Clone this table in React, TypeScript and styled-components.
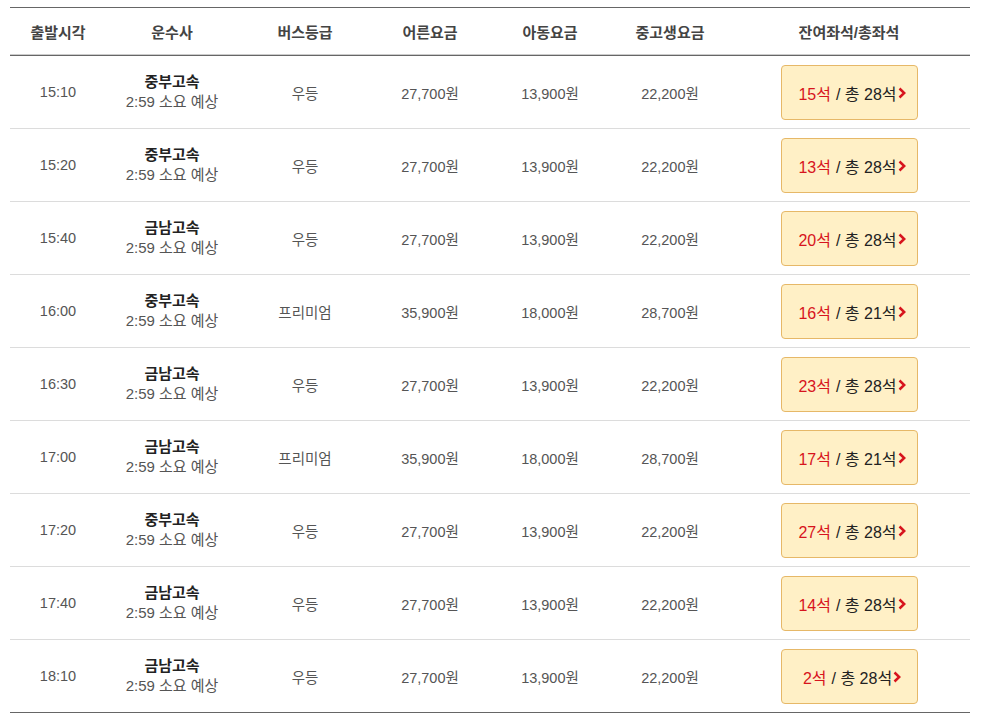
import React from "react";
import styled, { createGlobalStyle } from "styled-components";

const Global = createGlobalStyle`
  html, body { margin: 0; padding: 0; background: #fff; }
  body { font-family: "Liberation Sans", "Noto Sans CJK KR", sans-serif; }
`;

const Wrap = styled.div`
  padding: 7px 0 0 10px;
`;

const Table = styled.table`
  width: 960px;
  border-collapse: collapse;
  table-layout: fixed;
  border-top: 1px solid #666;
  border-bottom: 1px solid #666;
`;

const Th = styled.th<{ $w: number }>`
  width: ${(p) => p.$w}px;
  height: 47px;
  padding: 0;
  font-size: 15px;
  font-weight: bold;
  color: #444;
  text-align: center;
  vertical-align: middle;
  border-bottom: 1px solid #666;
  box-shadow: inset 0 -1px 0 #ccc;
`;

const Tr = styled.tr`
  & + & td { border-top: 1px solid #dcdcdc; }
`;

const Td = styled.td`
  height: 72px;
  padding: 0;
  font-size: 14.5px;
  color: #555;
  text-align: center;
  vertical-align: middle;
`;

const Company = styled.div`
  font-size: 15px;
  font-weight: bold;
  color: #222;
  line-height: 20px;
`;

const Duration = styled.div`
  font-size: 15px;
  color: #555;
  line-height: 20px;
`;

const SeatButton = styled.button`
  width: 137px;
  height: 55px;
  margin-top: 1px;
  background: #fff0c6;
  border: 1px solid #e6b868;
  border-radius: 4px;
  display: inline-flex;
  align-items: center;
  justify-content: center;
  font-family: "Liberation Sans", "Noto Sans CJK KR", sans-serif;
  font-size: 16px;
  color: #222;
  cursor: pointer;
  padding: 0 0 0 6px;
`;

const Remain = styled.span`
  color: #d7141d;
  margin-right: 5px;
`;

const Total = styled.span`
  color: #222;
`;

const Chevron = () => (
  <svg width="8" height="12" viewBox="0 0 8 12" style={{ marginLeft: 1 }}>
    <polyline points="1.5,1.5 6.2,6 1.5,10.5" fill="none" stroke="#d7141d" strokeWidth="2.5" />
  </svg>
);

const cols = [96, 132, 134, 116, 124, 116, 242];
const heads = ["출발시각", "운수사", "버스등급", "어른요금", "아동요금", "중고생요금", "잔여좌석/총좌석"];

type Row = [string, string, string, string, string, string, number, number];
const rows: Row[] = [
  ["15:10", "중부고속", "우등", "27,700원", "13,900원", "22,200원", 15, 28],
  ["15:20", "중부고속", "우등", "27,700원", "13,900원", "22,200원", 13, 28],
  ["15:40", "금남고속", "우등", "27,700원", "13,900원", "22,200원", 20, 28],
  ["16:00", "중부고속", "프리미엄", "35,900원", "18,000원", "28,700원", 16, 21],
  ["16:30", "금남고속", "우등", "27,700원", "13,900원", "22,200원", 23, 28],
  ["17:00", "금남고속", "프리미엄", "35,900원", "18,000원", "28,700원", 17, 21],
  ["17:20", "중부고속", "우등", "27,700원", "13,900원", "22,200원", 27, 28],
  ["17:40", "금남고속", "우등", "27,700원", "13,900원", "22,200원", 14, 28],
  ["18:10", "금남고속", "우등", "27,700원", "13,900원", "22,200원", 2, 28],
];

export default function App() {
  return (
    <>
      <Global />
      <Wrap>
        <Table>
          <thead>
            <tr>
              {heads.map((h, i) => (
                <Th key={h} $w={cols[i]}>{h}</Th>
              ))}
            </tr>
          </thead>
          <tbody>
            {rows.map((r, i) => (
              <Tr key={i}>
                <Td>{r[0]}</Td>
                <Td>
                  <Company>{r[1]}</Company>
                  <Duration>2:59 소요 예상</Duration>
                </Td>
                <Td>{r[2]}</Td>
                <Td>{r[3]}</Td>
                <Td>{r[4]}</Td>
                <Td>{r[5]}</Td>
                <Td>
                  <SeatButton>
                    <Remain>{r[6]}석</Remain>
                    <Total>/ 총 {r[7]}석</Total>
                    <Chevron />
                  </SeatButton>
                </Td>
              </Tr>
            ))}
          </tbody>
        </Table>
      </Wrap>
    </>
  );
}
